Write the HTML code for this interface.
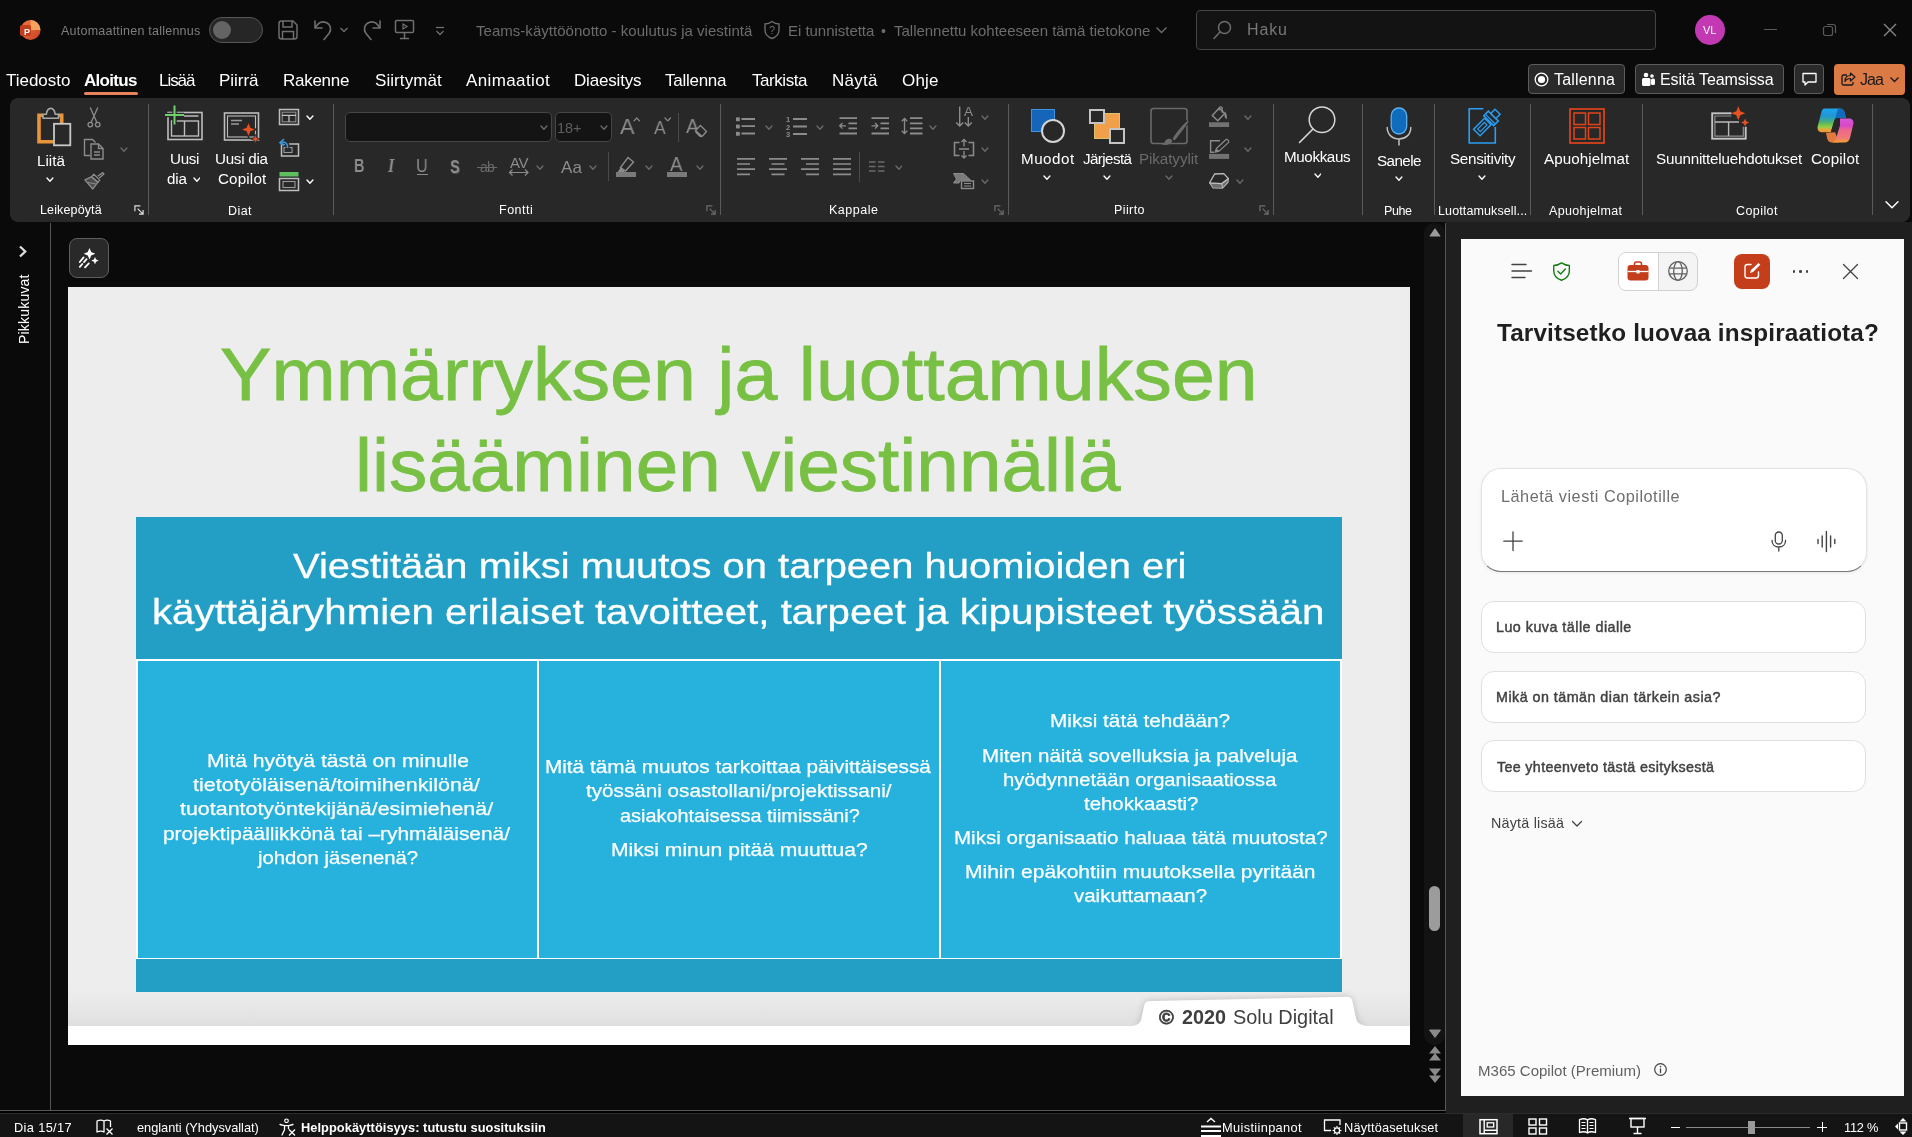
<!DOCTYPE html>
<html lang="fi"><head><meta charset="utf-8"><title>PowerPoint</title><style>
html,body{margin:0;padding:0;background:#0a0a0a;}
body{width:1912px;height:1137px;position:relative;overflow:hidden;font-family:"Liberation Sans",sans-serif;}
.a{position:absolute;display:block;}
.t{position:absolute;white-space:nowrap;line-height:1;transform-origin:0 0;will-change:transform;}
</style></head><body>
<div class="a" style="left:10px;top:98px;width:1900px;height:124px;background:#282828;border-radius:8px;"></div>
<div class="a" style="left:50px;top:223px;width:1px;height:888px;background:#555555;"></div>
<div class="a" style="left:0px;top:1110px;width:1446px;height:1px;background:#565656;"></div>
<div class="a" style="left:0px;top:1111px;width:1445px;height:2px;background:#000000;"></div>
<div class="a" style="left:1424px;top:223px;width:21px;height:822px;background:#131313;border-radius:10px;"></div>
<div class="a" style="left:1445px;top:223px;width:1px;height:888px;background:#565656;"></div>
<div class="a" style="left:1446px;top:222px;width:466px;height:891px;background:#1f1f1f;"></div>
<svg class="a" style="left:19px;top:19px;" width="22" height="22" viewBox="0 0 22 22" fill="none"><defs><linearGradient id="pg" x1="0" y1="0" x2="1" y2="1"><stop offset="0" stop-color="#f07a4a"/><stop offset="1" stop-color="#c8401e"/></linearGradient></defs>
<circle cx="11.5" cy="11" r="10" fill="url(#pg)"/><path d="M11.5 1a10 10 0 0 1 10 10h-10z" fill="#f4a35f"/>
<rect x="1" y="6" width="11" height="11" rx="2" fill="#c43e1c"/></svg>
<span class="t" style="left:24.20px;top:28.00px;font-size:9px;color:#fff;font-weight:700;">P</span>
<span class="t" style="left:61.00px;top:25.00px;font-size:12.5px;color:#7e7e7e;letter-spacing:0.233px;">Automaattinen tallennus</span>
<div class="a" style="left:209px;top:17px;width:54px;height:26px;background:#262626;border:1.5px solid #575757;box-sizing:border-box;border-radius:13px;"></div>
<div class="a" style="left:213px;top:21px;width:18px;height:18px;background:#646464;border-radius:9px;"></div>
<svg class="a" style="left:277px;top:19px;" width="22" height="22" viewBox="0 0 22 22" fill="none"><path d="M2 4.5A2.5 2.5 0 0 1 4.500 2H16l4 4v11.5a2.500 2.500 0 0 1-2.500 2.500h-13A2.500 2.500 0 0 1 2 17.500z M6 2v6h9V2 M5.5 20v-7.500h11V20" stroke="#6f6f6f" stroke-width="1.5"/></svg>
<svg class="a" style="left:312px;top:18px;" width="24" height="24" viewBox="0 0 24 24" fill="none"><path d="M3 3v7h7" stroke="#6f6f6f" stroke-width="1.6" stroke-linecap="round" stroke-linejoin="round"/><path d="M3.500 9.500C6 5 10 3 14 4.500c4.500 1.700 6 7 3 11L12 21.500" stroke="#6f6f6f" stroke-width="1.600" stroke-linecap="round"/></svg>
<svg class="a" style="left:339px;top:26px;" width="10" height="8" viewBox="0 0 10 8" fill="none"><path d="M1.500 2l3.500 3.500L8.500 2" stroke="#6f6f6f" stroke-width="1.300"/></svg>
<svg class="a" style="left:359px;top:18px;" width="24" height="24" viewBox="0 0 24 24" fill="none"><path d="M21 3v7h-7" stroke="#6f6f6f" stroke-width="1.6" stroke-linecap="round" stroke-linejoin="round"/><path d="M20.500 9.500C18 5 14 3 10 4.500c-4.500 1.700-6 7-3 11L12 21.500" stroke="#6f6f6f" stroke-width="1.600" stroke-linecap="round"/></svg>
<svg class="a" style="left:394px;top:19px;" width="22" height="22" viewBox="0 0 22 22" fill="none"><rect x="1.500" y="1.500" width="18" height="12" rx="1" stroke="#6f6f6f" stroke-width="1.500"/><path d="M10.500 13.500v6M6 19.500h9" stroke="#6f6f6f" stroke-width="1.500"/><path d="M9 5l4 2.500L9 10z" stroke="#6f6f6f" stroke-width="1.200"/></svg>
<svg class="a" style="left:434px;top:26px;" width="12" height="12" viewBox="0 0 12 12" fill="none"><path d="M2 1.500h8" stroke="#6f6f6f" stroke-width="1.300"/><path d="M2.500 5l3.500 3.500L9.500 5" stroke="#6f6f6f" stroke-width="1.300"/></svg>
<span class="t" style="left:476.00px;top:23.00px;font-size:15px;color:#6c6c6c;letter-spacing:0.029px;">Teams-käyttöönotto - koulutus ja viestintä</span>
<svg class="a" style="left:763px;top:20px;" width="18" height="20" viewBox="0 0 18 20" fill="none"><path d="M9 1.500c2.500 2 4.500 2.500 7 2.500v6c0 4-3 7-7 8.500C5 17 2 14 2 10V4c2.500 0 4.500-.5 7-2.500z" stroke="#6c6c6c" stroke-width="1.400"/></svg>
<span class="t" style="left:769.00px;top:25.00px;font-size:11px;color:#6c6c6c;">?</span>
<span class="t" style="left:788.00px;top:23.00px;font-size:15px;color:#6c6c6c;letter-spacing:-0.029px;">Ei tunnistetta</span>
<span class="t" style="left:880.50px;top:24.00px;font-size:14px;color:#6c6c6c;">•</span>
<span class="t" style="left:894.00px;top:23.00px;font-size:15px;color:#6c6c6c;letter-spacing:-0.014px;">Tallennettu kohteeseen tämä tietokone</span>
<svg class="a" style="left:1155px;top:25px;" width="13" height="10" viewBox="0 0 13 10" fill="none"><path d="M1.500 2.500l5 5 5-5" stroke="#6c6c6c" stroke-width="1.400"/></svg>
<div class="a" style="left:1196px;top:10px;width:460px;height:40px;background:#131313;border:1px solid #444;box-sizing:border-box;border-radius:4px;"></div>
<svg class="a" style="left:1212px;top:19px;" width="22" height="22" viewBox="0 0 22 22" fill="none"><circle cx="12.500" cy="8.500" r="6" stroke="#6d6d6d" stroke-width="1.500"/><path d="M8 13l-6 6.500" stroke="#6d6d6d" stroke-width="1.500" stroke-linecap="round"/></svg>
<span class="t" style="left:1247.00px;top:22.00px;font-size:16px;color:#777;letter-spacing:0.849px;">Haku</span>
<div class="a" style="left:1695px;top:15px;width:30px;height:30px;background:#c239b3;border-radius:15px;"></div>
<span class="t" style="left:1703.33px;top:25.00px;font-size:11px;color:#fff;">VL</span>
<div class="a" style="left:1764px;top:29px;width:13px;height:1px;background:#5a5a5a;"></div>
<svg class="a" style="left:1822px;top:22px;" width="16" height="16" viewBox="0 0 16 16" fill="none"><rect x="1.500" y="4.500" width="9" height="9" rx="2" stroke="#5a5a5a" stroke-width="1.200"/><path d="M5 2.500h6a2.500 2.500 0 0 1 2.500 2.500v6" stroke="#5a5a5a" stroke-width="1.200"/></svg>
<svg class="a" style="left:1882px;top:22px;" width="16" height="16" viewBox="0 0 16 16" fill="none"><path d="M2 2l12 12M14 2L2 14" stroke="#8a8a8a" stroke-width="1.300"/></svg>
<span class="t" style="left:6.00px;top:72.00px;font-size:17px;color:#fff;letter-spacing:-0.017px;">Tiedosto</span>
<span class="t" style="left:84.00px;top:72.00px;font-size:17px;color:#fff;font-weight:700;letter-spacing:-0.692px;">Aloitus</span>
<span class="t" style="left:159.00px;top:72.00px;font-size:17px;color:#fff;letter-spacing:-1.047px;">Lisää</span>
<span class="t" style="left:219.00px;top:72.00px;font-size:17px;color:#fff;letter-spacing:-0.043px;">Piirrä</span>
<span class="t" style="left:283.00px;top:72.00px;font-size:17px;color:#fff;letter-spacing:-0.266px;">Rakenne</span>
<span class="t" style="left:375.00px;top:72.00px;font-size:17px;color:#fff;letter-spacing:0.076px;">Siirtymät</span>
<span class="t" style="left:466.00px;top:72.00px;font-size:17px;color:#fff;letter-spacing:0.378px;">Animaatiot</span>
<span class="t" style="left:574.00px;top:72.00px;font-size:17px;color:#fff;letter-spacing:-0.183px;">Diaesitys</span>
<span class="t" style="left:665.00px;top:72.00px;font-size:17px;color:#fff;letter-spacing:-0.267px;">Tallenna</span>
<span class="t" style="left:752.00px;top:72.00px;font-size:17px;color:#fff;letter-spacing:-0.445px;">Tarkista</span>
<span class="t" style="left:832.00px;top:72.00px;font-size:17px;color:#fff;letter-spacing:0.261px;">Näytä</span>
<span class="t" style="left:902.00px;top:72.00px;font-size:17px;color:#fff;letter-spacing:0.182px;">Ohje</span>
<div class="a" style="left:84px;top:92px;width:54px;height:3px;background:#e8825a;border-radius:1.5px;"></div>
<div class="a" style="left:1528px;top:64px;width:97px;height:30px;background:#2a2a2a;border:1px solid #5c5c5c;box-sizing:border-box;border-radius:4px;"></div>
<svg class="a" style="left:1534px;top:72px;" width="15" height="15" viewBox="0 0 15 15" fill="none"><circle cx="7.500" cy="7.500" r="6.300" stroke="#fff" stroke-width="1.300"/><circle cx="7.500" cy="7.500" r="3.600" fill="#fff"/></svg>
<span class="t" style="left:1554.00px;top:72.00px;font-size:16px;color:#fff;letter-spacing:0.185px;">Tallenna</span>
<div class="a" style="left:1635px;top:64px;width:149px;height:30px;background:#2a2a2a;border:1px solid #5c5c5c;box-sizing:border-box;border-radius:4px;"></div>
<svg class="a" style="left:1640px;top:71px;" width="16" height="16" viewBox="0 0 16 16" fill="none"><circle cx="6" cy="4" r="2.300" fill="#fff"/><circle cx="12" cy="5" r="1.800" fill="#fff"/><rect x="2" y="7" width="8.500" height="8" rx="1.500" fill="#fff"/><rect x="11" y="7.500" width="4" height="6.500" rx="1.500" fill="#fff"/></svg>
<span class="t" style="left:1660.00px;top:72.00px;font-size:16px;color:#fff;letter-spacing:-0.121px;">Esitä Teamsissa</span>
<div class="a" style="left:1794px;top:64px;width:30px;height:30px;background:#2a2a2a;border:1px solid #5c5c5c;box-sizing:border-box;border-radius:4px;"></div>
<svg class="a" style="left:1801px;top:71px;" width="17" height="16" viewBox="0 0 17 16" fill="none"><path d="M2 2.500h13v8.500H7l-3 3v-3H2z" stroke="#fff" stroke-width="1.300" stroke-linejoin="round"/></svg>
<div class="a" style="left:1834px;top:64px;width:71px;height:30.5px;background:#dc7a45;border-radius:4px;"></div>
<svg class="a" style="left:1840px;top:71px;" width="17" height="16" viewBox="0 0 17 16" fill="none"><path d="M7 4H3.500A1.500 1.500 0 0 0 2 5.500v7A1.500 1.500 0 0 0 3.500 14h8a1.500 1.500 0 0 0 1.500-1.500V11" stroke="#1a1a1a" stroke-width="1.300"/><path d="M10.500 2l4.500 4-4.500 4V7.500c-3 0-4.500 1-5.500 3 0-4 2-6 5.500-6z" stroke="#1a1a1a" stroke-width="1.200" stroke-linejoin="round"/></svg>
<span class="t" style="left:1860.00px;top:72.00px;font-size:16px;color:#1a1a1a;letter-spacing:-0.949px;">Jaa</span>
<svg class="a" style="left:1889px;top:75px;" width="11" height="9" viewBox="0 0 11 9" fill="none"><path d="M1.500 2.500l4 4 4-4" stroke="#1a1a1a" stroke-width="1.400"/></svg>
<svg class="a" style="left:35px;top:106px;" width="38" height="42" viewBox="0 0 38 42" fill="none"><path d="M8 9.200H4v26.600h14" stroke="#ea943a" stroke-width="3.600"/><path d="M23.500 9.200h3.200v8" stroke="#ea943a" stroke-width="3.600"/>
<path d="M8 12.300V8.300h3.300c.5-3.700 2.200-5.900 4.450-5.900s3.950 2.200 4.450 5.900h3.300v4z" fill="#282828" stroke="#a8a8a8" stroke-width="1.600" stroke-linejoin="round"/>
<rect x="19" y="17.800" width="16.300" height="21.500" fill="#282828" stroke="#c8c8c8" stroke-width="1.800"/></svg>
<span class="t" style="left:36.50px;top:153.00px;font-size:15.2px;color:#fff;letter-spacing:0.021px;">Liitä</span>
<svg class="a" style="left:46.45px;top:177.1px;" width="7.9" height="5.2" viewBox="0 0 7.9 5.2" fill="none"><path d="M1 1l2.95 3.2 2.95 -3.2" stroke="#fff" stroke-width="1.35" stroke-linecap="round" stroke-linejoin="round"/></svg>
<svg class="a" style="left:86px;top:106px;" width="16" height="23" viewBox="0 0 16 23" fill="none"><path d="M4.200 1.500l6.600 14.800M11.800 1.500L5.200 16.300" stroke="#8c8c8c" stroke-width="1.300"/><circle cx="4.300" cy="18.600" r="2.300" stroke="#8c8c8c" stroke-width="1.300"/><circle cx="11.700" cy="18.600" r="2.300" stroke="#8c8c8c" stroke-width="1.300"/></svg>
<svg class="a" style="left:83px;top:138px;" width="22" height="22" viewBox="0 0 22 22" fill="none"><path d="M7 17.500H1.500V1.500h8l3 3" stroke="#8c8c8c" stroke-width="1.400"/><path d="M8 6h7.500l4.500 4.500V21H8z" stroke="#8c8c8c" stroke-width="1.400" fill="#282828"/><path d="M15.500 6v4.500H20M11 14h6M11 17h6" stroke="#8c8c8c" stroke-width="1.300"/></svg>
<svg class="a" style="left:119.75px;top:147.0px;" width="7.9" height="5.2" viewBox="0 0 7.9 5.2" fill="none"><path d="M1 1l2.95 3.2 2.95 -3.2" stroke="#6a6a6a" stroke-width="1.35" stroke-linecap="round" stroke-linejoin="round"/></svg>
<svg class="a" style="left:83px;top:170px;" width="23" height="21" viewBox="0 0 23 21" fill="none"><path d="M14.600 6.300l5.200-3.700 1.200 1.500-4.800 4" stroke="#8c8c8c" stroke-width="1.300" stroke-linejoin="round"/><path d="M10.800 4.300l6 5.800-1.900 2.100-6.400-5.600z" stroke="#8c8c8c" stroke-width="1.300" stroke-linejoin="round"/><path d="M8.300 6.800L1.900 9.800l7.800 9.200 5.100-6.600z" stroke="#8c8c8c" stroke-width="1.300" fill="#4c4c4c" stroke-linejoin="round"/><path d="M5 12.500l8 1.500" stroke="#8c8c8c" stroke-width="1"/></svg>
<span class="t" style="left:39.70px;top:204.00px;font-size:12.5px;color:#fff;letter-spacing:0.132px;">Leikepöytä</span>
<svg class="a" style="left:133.5px;top:204.5px;" width="10" height="10" viewBox="0 0 11 11" fill="none"><path d="M1 7V1h6" stroke="#e0e0e0" stroke-width="1.300"/><path d="M4 4l6 6M10 5.500V10H5.500" stroke="#e0e0e0" stroke-width="1.300"/></svg>
<div class="a" style="left:148px;top:104px;width:1px;height:111px;background:#5a5a5a;"></div>
<svg class="a" style="left:164px;top:104px;" width="40" height="38" viewBox="0 0 40 38" fill="none"><rect x="4" y="8.500" width="34" height="27" stroke="#bdbdbd" stroke-width="1.600"/><rect x="7.500" y="17" width="27" height="15" stroke="#bdbdbd" stroke-width="1.400"/><path d="M20.500 17v15M20 12h14.500" stroke="#bdbdbd" stroke-width="1.400"/>
<rect x="0" y="1" width="21" height="21" fill="#282828" opacity="0"/><path d="M10.500 1.500v19M1 11h19" stroke="#282828" stroke-width="4.500"/><path d="M10.500 1.500v19M1 11h19" stroke="#6fcf6f" stroke-width="2"/></svg>
<span class="t" style="left:170.40px;top:151.00px;font-size:15.2px;color:#fff;letter-spacing:-0.336px;">Uusi</span>
<span class="t" style="left:167.30px;top:171.00px;font-size:15.2px;color:#fff;letter-spacing:-0.160px;">dia</span>
<svg class="a" style="left:192.55px;top:176.9px;" width="7.9" height="5.2" viewBox="0 0 7.9 5.2" fill="none"><path d="M1 1l2.95 3.2 2.95 -3.2" stroke="#fff" stroke-width="1.35" stroke-linecap="round" stroke-linejoin="round"/></svg>
<svg class="a" style="left:223px;top:111px;" width="40" height="34" viewBox="0 0 40 34" fill="none"><rect x="1.500" y="2" width="34" height="27" stroke="#bdbdbd" stroke-width="1.600"/><rect x="4.500" y="5" width="28" height="21" stroke="#bdbdbd" stroke-width="1.100"/><path d="M8 9.500h11M8 13h8" stroke="#9a9a9a" stroke-width="1.300"/>
<path d="M25.500 10.500l2.300 5.700 5.700 2.300-5.700 2.300-2.300 5.700-2.300-5.700-5.700-2.300 5.700-2.300z" fill="#e8501f" stroke="#282828" stroke-width="1.200"/><path d="M32.500 23.500l1.300 3.200 3.200 1.300-3.200 1.300-1.300 3.200-1.300-3.200-3.200-1.300 3.200-1.300z" fill="#e8501f" stroke="#282828" stroke-width=".8"/></svg>
<span class="t" style="left:215.30px;top:151.00px;font-size:15.2px;color:#fff;letter-spacing:-0.275px;">Uusi dia</span>
<span class="t" style="left:217.80px;top:171.00px;font-size:15.2px;color:#fff;letter-spacing:0.157px;">Copilot</span>
<svg class="a" style="left:278px;top:108px;" width="22" height="18" viewBox="0 0 22 18" fill="none"><rect x="1.500" y="1.500" width="19" height="15" stroke="#bdbdbd" stroke-width="1.500"/><rect x="4.200" y="4.200" width="13.600" height="9.600" stroke="#8f8f8f" stroke-width="1.100"/><path d="M4 7.300h14M11 7.300v6.500" stroke="#c4c4c4" stroke-width="1.300"/></svg>
<svg class="a" style="left:306.35px;top:115.0px;" width="7.9" height="5.2" viewBox="0 0 7.9 5.2" fill="none"><path d="M1 1l2.95 3.2 2.95 -3.2" stroke="#fff" stroke-width="1.35" stroke-linecap="round" stroke-linejoin="round"/></svg>
<svg class="a" style="left:278px;top:138px;" width="22" height="20" viewBox="0 0 22 20" fill="none"><rect x="3.500" y="6" width="17" height="12" stroke="#bdbdbd" stroke-width="1.500"/><rect x="6" y="9.500" width="8" height="5" stroke="#9a9a9a" stroke-width="1.100"/><path d="M9.500 10C10 5 7 2.500 3 4" stroke="#282828" stroke-width="4"/><path d="M9.500 10C10 5.500 7 3 2.500 4.500" stroke="#3a96dd" stroke-width="1.600"/><path d="M6 1L2 4.700l4.200 2.800" stroke="#3a96dd" stroke-width="1.600"/></svg>
<svg class="a" style="left:278px;top:171px;" width="22" height="21" viewBox="0 0 22 21" fill="none"><rect x="1.500" y="1" width="19" height="4.500" fill="#5fbf5f"/><rect x="1.500" y="7.500" width="19" height="12" stroke="#bdbdbd" stroke-width="1.500"/><rect x="5" y="10.500" width="12" height="6" stroke="#9a9a9a" stroke-width="1.100"/></svg>
<svg class="a" style="left:306.35px;top:179.0px;" width="7.9" height="5.2" viewBox="0 0 7.9 5.2" fill="none"><path d="M1 1l2.95 3.2 2.95 -3.2" stroke="#fff" stroke-width="1.35" stroke-linecap="round" stroke-linejoin="round"/></svg>
<span class="t" style="left:228.30px;top:205.00px;font-size:12.5px;color:#fff;letter-spacing:0.415px;">Diat</span>
<div class="a" style="left:333px;top:104px;width:1px;height:111px;background:#5a5a5a;"></div>
<div class="a" style="left:344.5px;top:112px;width:207px;height:29.5px;background:#141414;border:1px solid #464646;box-sizing:border-box;border-radius:5px;"></div>
<svg class="a" style="left:540.25px;top:125.0px;" width="7.9" height="5.2" viewBox="0 0 7.9 5.2" fill="none"><path d="M1 1l2.95 3.2 2.95 -3.2" stroke="#6a6a6a" stroke-width="1.35" stroke-linecap="round" stroke-linejoin="round"/></svg>
<div class="a" style="left:554.5px;top:112px;width:57.5px;height:29.5px;background:#141414;border:1px solid #464646;box-sizing:border-box;border-radius:5px;"></div>
<span class="t" style="left:557.00px;top:121.00px;font-size:14.5px;color:#5e5e5e;letter-spacing:-0.064px;">18+</span>
<svg class="a" style="left:600.35px;top:125.0px;" width="7.9" height="5.2" viewBox="0 0 7.9 5.2" fill="none"><path d="M1 1l2.95 3.2 2.95 -3.2" stroke="#6a6a6a" stroke-width="1.35" stroke-linecap="round" stroke-linejoin="round"/></svg>
<span class="t" style="left:619.70px;top:116.00px;font-size:22.5px;color:#8c8c8c;transform:scaleX(0.9667);">A</span>
<svg class="a" style="left:632.55px;top:116.8px;" width="7.5" height="4.8" viewBox="0 0 7.5 4.8" fill="none"><path d="M1 3.8l2.75 -2.8 2.75 2.8" stroke="#8c8c8c" stroke-width="1.2" stroke-linecap="round" stroke-linejoin="round"/></svg>
<span class="t" style="left:653.80px;top:118.00px;font-size:19px;color:#8c8c8c;transform:scaleX(0.9231);">A</span>
<svg class="a" style="left:664.45px;top:116.8px;" width="7.5" height="4.8" viewBox="0 0 7.5 4.8" fill="none"><path d="M1 1l2.75 2.8 2.75 -2.8" stroke="#8c8c8c" stroke-width="1.2" stroke-linecap="round" stroke-linejoin="round"/></svg>
<div class="a" style="left:678px;top:113px;width:1px;height:29px;background:#4a4a4a;"></div>
<span class="t" style="left:685.60px;top:115.00px;font-size:21px;color:#8c8c8c;transform:scaleX(0.9286);">A</span>
<svg class="a" style="left:694px;top:124px;" width="14" height="14" viewBox="0 0 14 14" fill="none"><path d="M6.500 1.500l6 6-4.500 5-6.500-6z" stroke="#8c8c8c" stroke-width="1.300" fill="#282828"/><path d="M1.800 6.500l6.200 6-2 .8-5-5z" fill="#8c8c8c"/></svg>
<span class="t" style="left:353.93px;top:157.00px;font-size:18.8px;color:#8c8c8c;font-weight:700;transform:scaleX(0.7750);">B</span>
<span class="t" style="left:388.16px;top:156.00px;font-size:19px;color:#8c8c8c;font-weight:700;font-style:italic;transform:scaleX(0.8556);font-family:'Liberation Serif',serif;">I</span>
<span class="t" style="left:416.37px;top:158.00px;font-size:17.5px;color:#8c8c8c;transform:scaleX(0.9273);">U</span>
<div class="a" style="left:416.5px;top:174px;width:11.5px;height:1.3px;background:#8c8c8c;"></div>
<span class="t" style="left:449.90px;top:157.00px;font-size:19px;color:#8c8c8c;font-weight:700;transform:scaleX(0.7667);text-shadow:1px 1px 0 #555;">S</span>
<span class="t" style="left:479.50px;top:160.00px;font-size:14px;color:#6a6a6a;letter-spacing:-0.786px;">ab</span>
<div class="a" style="left:477px;top:166.5px;width:20px;height:1.2px;background:#6a6a6a;"></div>
<span class="t" style="left:509.50px;top:155.00px;font-size:15px;color:#8c8c8c;letter-spacing:-0.392px;">AV</span>
<svg class="a" style="left:508px;top:168px;" width="22" height="9" viewBox="0 0 22 9" fill="none"><path d="M1.500 4.500h18.500M4.500 1.500l-3 3 3 3M17 1.500l3 3-3 3" stroke="#8c8c8c" stroke-width="1.200"/></svg>
<svg class="a" style="left:536.45px;top:164.9px;" width="7.9" height="5.2" viewBox="0 0 7.9 5.2" fill="none"><path d="M1 1l2.95 3.2 2.95 -3.2" stroke="#6a6a6a" stroke-width="1.35" stroke-linecap="round" stroke-linejoin="round"/></svg>
<span class="t" style="left:561.00px;top:159.00px;font-size:17px;color:#8c8c8c;letter-spacing:0.161px;">Aa</span>
<svg class="a" style="left:588.75px;top:164.9px;" width="7.9" height="5.2" viewBox="0 0 7.9 5.2" fill="none"><path d="M1 1l2.95 3.2 2.95 -3.2" stroke="#6a6a6a" stroke-width="1.35" stroke-linecap="round" stroke-linejoin="round"/></svg>
<div class="a" style="left:608px;top:152px;width:1px;height:29px;background:#4a4a4a;"></div>
<svg class="a" style="left:615px;top:156px;" width="22" height="17" viewBox="0 0 22 17" fill="none"><path d="M13 1.500l5.500 4.500-8 9-5-3.500z" stroke="#8c8c8c" stroke-width="1.400"/><path d="M5.500 11.500l4.500 3.500-2 1.500H2.500z" fill="#8c8c8c"/></svg>
<div class="a" style="left:616px;top:172.4px;width:20px;height:4.2px;background:#7a7a7a;"></div>
<svg class="a" style="left:645.25px;top:164.9px;" width="7.9" height="5.2" viewBox="0 0 7.9 5.2" fill="none"><path d="M1 1l2.95 3.2 2.95 -3.2" stroke="#6a6a6a" stroke-width="1.35" stroke-linecap="round" stroke-linejoin="round"/></svg>
<span class="t" style="left:669.80px;top:155.00px;font-size:19.5px;color:#8c8c8c;transform:scaleX(0.9615);">A</span>
<div class="a" style="left:667px;top:172.4px;width:20px;height:4.2px;background:#7a7a7a;"></div>
<svg class="a" style="left:696.45px;top:164.9px;" width="7.9" height="5.2" viewBox="0 0 7.9 5.2" fill="none"><path d="M1 1l2.95 3.2 2.95 -3.2" stroke="#6a6a6a" stroke-width="1.35" stroke-linecap="round" stroke-linejoin="round"/></svg>
<span class="t" style="left:499.30px;top:204.00px;font-size:12.5px;color:#fff;letter-spacing:0.503px;">Fontti</span>
<svg class="a" style="left:705.5px;top:204.5px;" width="10" height="10" viewBox="0 0 11 11" fill="none"><path d="M1 7V1h6" stroke="#6e6e6e" stroke-width="1.300"/><path d="M4 4l6 6M10 5.500V10H5.500" stroke="#6e6e6e" stroke-width="1.300"/></svg>
<div class="a" style="left:720px;top:104px;width:1px;height:111px;background:#5a5a5a;"></div>
<svg class="a" style="left:735px;top:116px;" width="21" height="21" viewBox="0 0 21 21" fill="none"><rect x="1" y="1.4" width="3.800" height="3.800" fill="#8c8c8c"/><rect x="1" y="8.6" width="3.800" height="3.800" fill="#8c8c8c"/><rect x="1" y="15.9" width="3.800" height="3.800" fill="#8c8c8c"/><path d="M6.5 3h13.5M6.5 10.2h13.5M6.5 17.5h13.5" stroke="#8c8c8c" stroke-width="1.8"/></svg>
<svg class="a" style="left:765.35px;top:124.9px;" width="7.9" height="5.2" viewBox="0 0 7.9 5.2" fill="none"><path d="M1 1l2.95 3.2 2.95 -3.2" stroke="#6a6a6a" stroke-width="1.35" stroke-linecap="round" stroke-linejoin="round"/></svg>
<svg class="a" style="left:785px;top:115px;" width="23" height="23" viewBox="0 0 23 23" fill="none"><path d="M8 4h14M8 11.5h14M8 19h14" stroke="#8c8c8c" stroke-width="1.8"/></svg>
<span class="t" style="left:786.30px;top:116.00px;font-size:7.5px;color:#8c8c8c;font-weight:700;">1</span>
<span class="t" style="left:786.30px;top:124.00px;font-size:7.5px;color:#8c8c8c;font-weight:700;">2</span>
<span class="t" style="left:786.30px;top:131.00px;font-size:7.5px;color:#8c8c8c;font-weight:700;">3</span>
<svg class="a" style="left:816.45px;top:124.9px;" width="7.9" height="5.2" viewBox="0 0 7.9 5.2" fill="none"><path d="M1 1l2.95 3.2 2.95 -3.2" stroke="#6a6a6a" stroke-width="1.35" stroke-linecap="round" stroke-linejoin="round"/></svg>
<svg class="a" style="left:838px;top:116px;" width="20" height="21" viewBox="0 0 20 21" fill="none"><path d="M1.5 2.2h17.5M10.5 7.3h8.5M10.5 12.4h8.5M1.5 17.5h17.5" stroke="#8c8c8c" stroke-width="1.8"/><path d="M8 9.800H2M4.500 7L1.700 9.800l2.800 2.800" stroke="#8c8c8c" stroke-width="1.300"/></svg>
<svg class="a" style="left:870px;top:116px;" width="20" height="21" viewBox="0 0 20 21" fill="none"><path d="M1.5 2.2h17.5M10.5 7.3h8.5M10.5 12.4h8.5M1.5 17.5h17.5" stroke="#8c8c8c" stroke-width="1.8"/><path d="M1.500 9.800H7.500M5 7l2.800 2.800L5 12.600" stroke="#8c8c8c" stroke-width="1.300"/></svg>
<svg class="a" style="left:900px;top:116px;" width="24" height="21" viewBox="0 0 24 21" fill="none"><path d="M10 2.2h12.5M10 7.3h12.5M10 12.4h12.5M10 17.5h12.5" stroke="#8c8c8c" stroke-width="1.8"/><path d="M4.500 2.500v15M1.800 5.200L4.500 2.500l2.700 2.700M1.800 14.800l2.700 2.700 2.700-2.700" stroke="#8c8c8c" stroke-width="1.300"/></svg>
<svg class="a" style="left:929.45px;top:124.9px;" width="7.9" height="5.2" viewBox="0 0 7.9 5.2" fill="none"><path d="M1 1l2.95 3.2 2.95 -3.2" stroke="#6a6a6a" stroke-width="1.35" stroke-linecap="round" stroke-linejoin="round"/></svg>
<svg class="a" style="left:954px;top:105px;" width="22" height="24" viewBox="0 0 22 24" fill="none"><path d="M5.700 1.500v19.500M2.200 17.500l3.500 3.500 3.500-3.500M14.300 12v9M10.800 17.500l3.500 3.500 3.500-3.500" stroke="#8c8c8c" stroke-width="1.400"/></svg>
<span class="t" style="left:963.80px;top:105.00px;font-size:13.5px;color:#8c8c8c;">A</span>
<svg class="a" style="left:981.35px;top:115.2px;" width="7.9" height="5.2" viewBox="0 0 7.9 5.2" fill="none"><path d="M1 1l2.95 3.2 2.95 -3.2" stroke="#6a6a6a" stroke-width="1.35" stroke-linecap="round" stroke-linejoin="round"/></svg>
<svg class="a" style="left:952px;top:138px;" width="24" height="21" viewBox="0 0 24 21" fill="none"><path d="M7.500 4.500H2.500v13H7.500M16.500 4.500h5v13H16.500" stroke="#8c8c8c" stroke-width="1.500"/><path d="M7 11h10M12 1.500v7M9.500 4L12 1.500 14.500 4M12 13v7M9.500 17.500L12 20l2.500-2.500" stroke="#8c8c8c" stroke-width="1.300"/></svg>
<svg class="a" style="left:981.35px;top:146.8px;" width="7.9" height="5.2" viewBox="0 0 7.9 5.2" fill="none"><path d="M1 1l2.95 3.2 2.95 -3.2" stroke="#6a6a6a" stroke-width="1.35" stroke-linecap="round" stroke-linejoin="round"/></svg>
<svg class="a" style="left:952px;top:172px;" width="24" height="18" viewBox="0 0 24 18" fill="none"><path d="M1.500 1.500h10l7 6.500h-10l-1.500 3-5.500 0 3-4z" fill="#7a7a7a" stroke="#8c8c8c" stroke-width="1"/><rect x="9.500" y="9" width="12" height="7.500" fill="#282828" stroke="#8c8c8c" stroke-width="1.400"/><path d="M12 11.500h7M12 14h7" stroke="#8c8c8c" stroke-width="1"/></svg>
<svg class="a" style="left:981.35px;top:178.7px;" width="7.9" height="5.2" viewBox="0 0 7.9 5.2" fill="none"><path d="M1 1l2.95 3.2 2.95 -3.2" stroke="#6a6a6a" stroke-width="1.35" stroke-linecap="round" stroke-linejoin="round"/></svg>
<svg class="a" style="left:736px;top:156px;" width="20" height="20" viewBox="0 0 20 20" fill="none"><path d="M1 2.8000000000000114h18M1 8h13M1 13.199999999999989h18M1 18.400000000000006h13" stroke="#8c8c8c" stroke-width="1.7"/></svg>
<svg class="a" style="left:768px;top:156px;" width="20" height="20" viewBox="0 0 20 20" fill="none"><path d="M1 2.8000000000000114h18M3.5 8h13.0M1 13.199999999999989h18M3.5 18.400000000000006h13.0" stroke="#8c8c8c" stroke-width="1.7"/></svg>
<svg class="a" style="left:800px;top:156px;" width="20" height="20" viewBox="0 0 20 20" fill="none"><path d="M1 2.8000000000000114h18M6 8h13M1 13.199999999999989h18M6 18.400000000000006h13" stroke="#8c8c8c" stroke-width="1.7"/></svg>
<svg class="a" style="left:832px;top:156px;" width="20" height="20" viewBox="0 0 20 20" fill="none"><path d="M1 2.8000000000000114h18M1 8h18M1 13.199999999999989h18M1 18.400000000000006h18" stroke="#8c8c8c" stroke-width="1.7"/></svg>
<div class="a" style="left:859px;top:152px;width:1px;height:30px;background:#4a4a4a;"></div>
<svg class="a" style="left:868px;top:160px;" width="18" height="13" viewBox="0 0 18 13" fill="none"><path d="M1 2h6.5M1 6.5h6.5M1 11h6.5M10 2h6.5M10 6.5h6.5M10 11h6.5" stroke="#6a6a6a" stroke-width="1.3"/></svg>
<svg class="a" style="left:894.55px;top:164.6px;" width="7.9" height="5.2" viewBox="0 0 7.9 5.2" fill="none"><path d="M1 1l2.95 3.2 2.95 -3.2" stroke="#6a6a6a" stroke-width="1.35" stroke-linecap="round" stroke-linejoin="round"/></svg>
<span class="t" style="left:829.00px;top:204.00px;font-size:12.5px;color:#fff;letter-spacing:0.513px;">Kappale</span>
<svg class="a" style="left:993.5px;top:204.5px;" width="10" height="10" viewBox="0 0 11 11" fill="none"><path d="M1 7V1h6" stroke="#6e6e6e" stroke-width="1.300"/><path d="M4 4l6 6M10 5.500V10H5.500" stroke="#6e6e6e" stroke-width="1.300"/></svg>
<div class="a" style="left:1008px;top:104px;width:1px;height:111px;background:#5a5a5a;"></div>
<div class="a" style="left:1030.5px;top:108.5px;width:24px;height:23.5px;background:#1566b9;border:1px solid #3f93e0;box-sizing:border-box;"></div>
<div class="a" style="left:1040.8px;top:118.6px;width:24.5px;height:24.5px;background:#282828;border:2px solid #d4d4d4;box-sizing:border-box;border-radius:13px;"></div>
<span class="t" style="left:1021.30px;top:151.00px;font-size:15.2px;color:#fff;letter-spacing:0.512px;">Muodot</span>
<svg class="a" style="left:1043.45px;top:175.2px;" width="7.9" height="5.2" viewBox="0 0 7.9 5.2" fill="none"><path d="M1 1l2.95 3.2 2.95 -3.2" stroke="#fff" stroke-width="1.35" stroke-linecap="round" stroke-linejoin="round"/></svg>
<div class="a" style="left:1094px;top:113px;width:26px;height:26px;background:#f0a04b;border:1px solid #d9c36a;box-sizing:border-box;"></div>
<div class="a" style="left:1089px;top:108.5px;width:16px;height:15.5px;background:#282828;border:2px solid #c4c4c4;box-sizing:border-box;"></div>
<div class="a" style="left:1109.4px;top:128.4px;width:15.5px;height:15.5px;background:#282828;border:2px solid #c4c4c4;box-sizing:border-box;"></div>
<span class="t" style="left:1082.60px;top:151.00px;font-size:15.2px;color:#fff;letter-spacing:-0.605px;">Järjestä</span>
<svg class="a" style="left:1102.75px;top:175.2px;" width="7.9" height="5.2" viewBox="0 0 7.9 5.2" fill="none"><path d="M1 1l2.95 3.2 2.95 -3.2" stroke="#fff" stroke-width="1.35" stroke-linecap="round" stroke-linejoin="round"/></svg>
<svg class="a" style="left:1149px;top:106px;" width="42" height="40" viewBox="0 0 42 40" fill="none"><rect x="2" y="2.500" width="36" height="35" rx="2.500" stroke="#6a6a6a" stroke-width="1.600"/><path d="M38.500 15.500C33 20 27 28 24 33.500" stroke="#282828" stroke-width="5"/><path d="M39 14.500C33 19 26.500 27.500 23.500 33l2 1.500C30 29 36 21.500 39.500 16z" fill="#6a6a6a"/><path d="M22 33c-3-1-6 1-6.500 3.500-1 1.500-3 1.500-4.500 1 4 2.500 10 2 12.500-2.500z" fill="#6a6a6a"/></svg>
<span class="t" style="left:1139.30px;top:151.00px;font-size:15.2px;color:#6a6a6a;letter-spacing:-0.078px;">Pikatyylit</span>
<svg class="a" style="left:1164.65px;top:175.2px;" width="7.9" height="5.2" viewBox="0 0 7.9 5.2" fill="none"><path d="M1 1l2.95 3.2 2.95 -3.2" stroke="#6a6a6a" stroke-width="1.35" stroke-linecap="round" stroke-linejoin="round"/></svg>
<svg class="a" style="left:1208px;top:105px;" width="22" height="23" viewBox="0 0 22 23" fill="none"><path d="M11.200 3L4.300 10.500l5.500 5.300 6.800-7.200z" stroke="#8c8c8c" stroke-width="1.400" stroke-linejoin="round"/><path d="M11.200 5.500V3.300a1.500 1.500 0 0 1 3 0V7.800" stroke="#8c8c8c" stroke-width="1.300"/><path d="M16.800 6.300c1.700 2.300 2.400 4.700 2 7.800-1-.3-2.300-2-2.300-3.600z" fill="#8c8c8c"/><rect x="1" y="17.300" width="20.100" height="4.700" fill="#727272"/></svg>
<svg class="a" style="left:1244.45px;top:115.2px;" width="7.9" height="5.2" viewBox="0 0 7.9 5.2" fill="none"><path d="M1 1l2.95 3.2 2.95 -3.2" stroke="#6a6a6a" stroke-width="1.35" stroke-linecap="round" stroke-linejoin="round"/></svg>
<svg class="a" style="left:1208px;top:137px;" width="22" height="23" viewBox="0 0 22 23" fill="none"><path d="M12 3.700H2.600v11.600H6.200" stroke="#8c8c8c" stroke-width="1.400"/><path d="M7.100 15.300l1.300-3.800 8.800-8.300a1.900 1.900 0 0 1 2.900 2.700l-9 8.200z" stroke="#8c8c8c" stroke-width="1.200" stroke-linejoin="round"/><path d="M7.100 15.300l1.300-3.800 2.700 2.600z" fill="#8c8c8c"/><rect x="1" y="16.900" width="20.100" height="5" fill="#727272"/></svg>
<svg class="a" style="left:1244.45px;top:147.0px;" width="7.9" height="5.2" viewBox="0 0 7.9 5.2" fill="none"><path d="M1 1l2.95 3.2 2.95 -3.2" stroke="#6a6a6a" stroke-width="1.35" stroke-linecap="round" stroke-linejoin="round"/></svg>
<svg class="a" style="left:1208px;top:171px;" width="22" height="19" viewBox="0 0 22 19" fill="none"><path d="M1.600 11.800l12.200.8.800 4.600-9.600-.2zM13.800 12.600l6.600-5-.4 3.800-5.400 5.800z" fill="#6e6e6e" stroke="#b0b0b0" stroke-width="1.100" stroke-linejoin="round"/><path d="M6.600 3l9.200-.4 4.600 5-6.600 5-12.200-.8z" fill="#282828" stroke="#c0c0c0" stroke-width="1.300" stroke-linejoin="round"/></svg>
<svg class="a" style="left:1236.25px;top:178.8px;" width="7.9" height="5.2" viewBox="0 0 7.9 5.2" fill="none"><path d="M1 1l2.95 3.2 2.95 -3.2" stroke="#6a6a6a" stroke-width="1.35" stroke-linecap="round" stroke-linejoin="round"/></svg>
<span class="t" style="left:1114.00px;top:204.00px;font-size:12.5px;color:#fff;letter-spacing:0.395px;">Piirto</span>
<svg class="a" style="left:1258.5px;top:204.5px;" width="10" height="10" viewBox="0 0 11 11" fill="none"><path d="M1 7V1h6" stroke="#6e6e6e" stroke-width="1.300"/><path d="M4 4l6 6M10 5.500V10H5.500" stroke="#6e6e6e" stroke-width="1.300"/></svg>
<div class="a" style="left:1273px;top:104px;width:1px;height:111px;background:#5a5a5a;"></div>
<svg class="a" style="left:1296px;top:104px;" width="42" height="42" viewBox="0 0 42 42" fill="none"><circle cx="26" cy="15.700" r="12.800" stroke="#d6d6d6" stroke-width="1.500"/><path d="M17 25L3.500 38.500" stroke="#d6d6d6" stroke-width="1.600" stroke-linecap="round"/></svg>
<span class="t" style="left:1284.30px;top:149.00px;font-size:15.2px;color:#fff;letter-spacing:-0.375px;">Muokkaus</span>
<svg class="a" style="left:1313.55px;top:173.1px;" width="7.9" height="5.2" viewBox="0 0 7.9 5.2" fill="none"><path d="M1 1l2.95 3.2 2.95 -3.2" stroke="#fff" stroke-width="1.35" stroke-linecap="round" stroke-linejoin="round"/></svg>
<div class="a" style="left:1362px;top:104px;width:1px;height:111px;background:#5a5a5a;"></div>
<svg class="a" style="left:1384px;top:105px;" width="30" height="42" viewBox="0 0 30 42" fill="none"><rect x="7.200" y="3" width="15.500" height="26" rx="7.700" fill="#0f6cbd" stroke="#5fb0f0" stroke-width="1.300"/><path d="M3.200 22.500c0 7 5.200 11.500 11.800 11.500s11.800-4.500 11.800-11.500M15 34v6" stroke="#c0c0c0" stroke-width="1.500" stroke-linecap="round"/></svg>
<span class="t" style="left:1377.00px;top:153.00px;font-size:15.2px;color:#fff;letter-spacing:-0.569px;">Sanele</span>
<svg class="a" style="left:1394.65px;top:176.4px;" width="7.9" height="5.2" viewBox="0 0 7.9 5.2" fill="none"><path d="M1 1l2.95 3.2 2.95 -3.2" stroke="#fff" stroke-width="1.35" stroke-linecap="round" stroke-linejoin="round"/></svg>
<span class="t" style="left:1383.70px;top:205.00px;font-size:12.5px;color:#fff;letter-spacing:-0.414px;">Puhe</span>
<div class="a" style="left:1434px;top:104px;width:1px;height:111px;background:#5a5a5a;"></div>
<svg class="a" style="left:1467px;top:105px;" width="40" height="40" viewBox="0 0 40 40" fill="none"><path d="M16.300 3.800H2.200V38H28.300V22" stroke="#2a9df4" stroke-width="1.600"/><g transform="translate(15.500 21.800) rotate(-45)" stroke="#2a9df4" fill="#282828"><rect x="-8" y="-4.600" width="15.500" height="9.200" stroke-width="1.500"/><rect x="-5" y="-1.800" width="9.500" height="3.600" stroke-width="1.200"/><rect x="8.800" y="-7" width="6.500" height="14" stroke-width="1.600"/><path d="M11 -7v14" stroke-width="1.200"/><rect x="15.300" y="-3.600" width="6" height="7.200" stroke-width="1.500"/></g></svg>
<span class="t" style="left:1450.00px;top:151.00px;font-size:15.2px;color:#fff;letter-spacing:-0.277px;">Sensitivity</span>
<svg class="a" style="left:1478.25px;top:174.8px;" width="7.9" height="5.2" viewBox="0 0 7.9 5.2" fill="none"><path d="M1 1l2.95 3.2 2.95 -3.2" stroke="#fff" stroke-width="1.35" stroke-linecap="round" stroke-linejoin="round"/></svg>
<span class="t" style="left:1437.70px;top:205.00px;font-size:12.5px;color:#fff;letter-spacing:0.115px;">Luottamuksell...</span>
<div class="a" style="left:1530px;top:104px;width:1px;height:111px;background:#5a5a5a;"></div>
<svg class="a" style="left:1568px;top:107px;" width="38" height="38" viewBox="0 0 38 38" fill="none"><rect x="6" y="6" width="11.500" height="11.500" stroke="#e0451a" stroke-width="1.500"/><rect x="6" y="20.5" width="11.500" height="11.500" stroke="#e0451a" stroke-width="1.500"/><rect x="20.5" y="6" width="11.500" height="11.500" stroke="#e0451a" stroke-width="1.500"/><rect x="20.5" y="20.5" width="11.500" height="11.500" stroke="#e0451a" stroke-width="1.500"/><rect x="2" y="2" width="34" height="34" stroke="#e0451a" stroke-width="1.700"/></svg>
<span class="t" style="left:1544.00px;top:151.00px;font-size:15.2px;color:#fff;letter-spacing:0.079px;">Apuohjelmat</span>
<span class="t" style="left:1549.00px;top:205.00px;font-size:12.5px;color:#fff;letter-spacing:0.348px;">Apuohjelmat</span>
<div class="a" style="left:1642px;top:104px;width:1px;height:111px;background:#5a5a5a;"></div>
<svg class="a" style="left:1709px;top:104px;" width="42" height="40" viewBox="0 0 42 40" fill="none"><rect x="3.200" y="9.300" width="33.500" height="25.400" stroke="#c4c4c4" stroke-width="1.900"/><path d="M5.900 12v20.100h28.400V12z" stroke="#8e8e8e" stroke-width="1.200"/><path d="M5.900 18h28.400M19.600 18v14" stroke="#b8b8b8" stroke-width="1.400"/><path d="M22.500 2h19.500v20.700H30v-8h-7.500z" fill="#282828"/><path d="M29.300 2.300l2 5 5 2-5 2-2 5-2-5-5-2 5-2z" fill="#e8501f"/><path d="M36.100 14.400l1.200 2.900 2.900 1.200-2.900 1.200-1.200 2.900-1.200-2.900-2.900-1.200 2.900-1.200z" fill="#e8501f"/></svg>
<span class="t" style="left:1655.80px;top:151.00px;font-size:15.2px;color:#fff;letter-spacing:-0.204px;">Suunnitteluehdotukset</span>
<svg class="a" style="left:1816.5px;top:108.3px;" width="38" height="36" viewBox="0 0 38 36" fill="none"><defs><linearGradient id="c1" x1="0" y1="0" x2="0" y2="1"><stop offset="0" stop-color="#1fa4ec"/><stop offset=".3" stop-color="#1f96d8"/><stop offset=".5" stop-color="#3aa896"/><stop offset=".62" stop-color="#5fb85a"/><stop offset=".78" stop-color="#90d048"/><stop offset=".9" stop-color="#f0a238"/><stop offset="1" stop-color="#f09a38"/></linearGradient>
<linearGradient id="c2" x1="0" y1="0" x2="0" y2="1"><stop offset="0" stop-color="#d65ad6"/><stop offset=".3" stop-color="#d848c8"/><stop offset=".5" stop-color="#ee6a8a"/><stop offset=".8" stop-color="#f07878"/><stop offset="1" stop-color="#f6a030"/></linearGradient></defs>
<path d="M9 25L10.200 30.500C10.800 33 12.500 34.500 15 34.500H22L18 24Z" fill="#e27a3c"/>
<path d="M7.500 .5H22.500C25.500 .5 27 2 27.600 4.500L29 9.800H21.500C19 9.800 17.800 11 17.200 13L13.800 24.200H5C1.500 24.200 -.2 21.600 .8 18L4.300 4.500C5 2 5.800 .5 7.500 .5Z" fill="url(#c1)"/>
<path d="M21 .5H22.500C25.500 .5 27 2 27.600 4.500L29 9.800H21.500C19.300 9.800 18.200 10.600 17.500 12.200Z" fill="#0f6cbd"/>
<path d="M23 10.400H32C35.500 10.400 37.200 13 36.200 16.500L33 30C32.300 32.600 30.500 34.500 27.500 34.500H15C17.500 34 18.500 32 19.200 30L23 17.500Z" fill="url(#c2)"/>
<path d="M19 10.400H23L19.500 22.500C19 24 18.200 24.300 17.500 24.300H13.800L17.200 13C17.500 11.800 18 10.800 19 10.400Z" fill="#282828"/></svg>
<span class="t" style="left:1811.00px;top:151.00px;font-size:15.2px;color:#fff;letter-spacing:0.157px;">Copilot</span>
<span class="t" style="left:1736.30px;top:205.00px;font-size:12.5px;color:#fff;letter-spacing:0.427px;">Copilot</span>
<div class="a" style="left:1872px;top:104px;width:1px;height:111px;background:#5a5a5a;"></div>
<svg class="a" style="left:1884px;top:199px;" width="16" height="12" viewBox="0 0 16 12" fill="none"><path d="M2 2.800l6 6 6-6" stroke="#fff" stroke-width="1.500" stroke-linecap="round" stroke-linejoin="round"/></svg>
<div class="a" style="left:68px;top:287px;width:1341.5px;height:758px;background:#ededed;"></div>
<div class="a" style="left:68px;top:988px;width:1341.5px;height:38px;background:linear-gradient(180deg,#ededed 0%,#e9e9e9 40%,#dfdfdf 100%);"></div>
<div class="a" style="left:68px;top:1026px;width:1341.5px;height:19px;background:#ffffff;"></div>
<svg class="a" style="left:1110px;top:985px;overflow:hidden;" width="290" height="41" viewBox="0 0 290 41" fill="none"><defs><filter id="ts" x="-10%" y="-40%" width="120%" height="180%"><feGaussianBlur stdDeviation="3.500"/></filter></defs>
<path d="M22 43C30 41 30.500 38 31.500 33L34 21C34.800 17.500 36.500 16 40 16L236 11.800C240 11.700 241.800 13 242.500 16.500L246 33C247 38 250 41 259 43Z" fill="#000" opacity=".2" filter="url(#ts)"/>
<path d="M18 41.500C28 41 30.500 38 31.500 33L34 21C34.800 17.500 36.500 16 40 16L236 11.800C240 11.700 241.800 13 242.500 16.500L246 33C247 38 250 41 263 41.500Z" fill="#fff"/></svg>
<span class="t" style="left:1159.00px;top:1008.00px;font-size:19.5px;color:#3f3f3f;font-weight:700;transform:scaleX(1.0333);-webkit-text-stroke:.7px #3f3f3f;">©</span>
<span class="t" style="left:1182.00px;top:1008.00px;font-size:19.8px;color:#3f3f3f;font-weight:700;">2020</span>
<span class="t" style="left:1233.00px;top:1008.00px;font-size:19.8px;color:#3f3f3f;transform:scaleX(1.0054);">Solu Digital</span>
<span class="t" style="left:220.05px;top:338.00px;font-size:73.5px;color:#77c043;transform:scaleX(1.0498);-webkit-text-stroke:.8px #77c043;">Ymmärryksen ja luottamuksen</span>
<span class="t" style="left:354.84px;top:429.00px;font-size:73.5px;color:#77c043;transform:scaleX(1.0410);-webkit-text-stroke:.8px #77c043;">lisääminen viestinnällä</span>
<div class="a" style="left:136px;top:517px;width:1206px;height:475px;background:#239fc5;"></div>
<div class="a" style="left:136px;top:659px;width:1206px;height:300px;background:#ffffff;"></div>
<div class="a" style="left:138px;top:660.5px;width:399px;height:297.5px;background:#27b1dd;"></div>
<div class="a" style="left:539px;top:660.5px;width:400px;height:297.5px;background:#27b1dd;"></div>
<div class="a" style="left:941px;top:660.5px;width:399px;height:297.5px;background:#27b1dd;"></div>
<span class="t" style="left:292.80px;top:549.00px;font-size:35.5px;color:#fff;transform:scaleX(1.1243);-webkit-text-stroke:.3px #fff;">Viestitään miksi muutos on tarpeen huomioiden eri</span>
<span class="t" style="left:152.43px;top:595.00px;font-size:35.5px;color:#fff;transform:scaleX(1.1338);-webkit-text-stroke:.3px #fff;">käyttäjäryhmien erilaiset tavoitteet, tarpeet ja kipupisteet työssään</span>
<span class="t" style="left:206.50px;top:751.00px;font-size:19.2px;color:#fff;transform:scaleX(1.1014);-webkit-text-stroke:.25px #fff;">Mitä hyötyä tästä on minulle</span>
<span class="t" style="left:193.20px;top:775.00px;font-size:19.2px;color:#fff;transform:scaleX(1.1206);-webkit-text-stroke:.25px #fff;">tietotyöläisenä/toimihenkilönä/</span>
<span class="t" style="left:180.00px;top:799.00px;font-size:19.2px;color:#fff;transform:scaleX(1.1162);-webkit-text-stroke:.25px #fff;">tuotantotyöntekijänä/esimiehenä/</span>
<span class="t" style="left:162.81px;top:824.00px;font-size:19.2px;color:#fff;transform:scaleX(1.0880);-webkit-text-stroke:.25px #fff;">projektipäällikkönä tai –ryhmäläisenä/</span>
<span class="t" style="left:258.06px;top:848.00px;font-size:19.2px;color:#fff;transform:scaleX(1.0564);-webkit-text-stroke:.25px #fff;">johdon jäsenenä?</span>
<span class="t" style="left:545.22px;top:757.00px;font-size:19.2px;color:#fff;transform:scaleX(1.0800);-webkit-text-stroke:.25px #fff;">Mitä tämä muutos tarkoittaa päivittäisessä</span>
<span class="t" style="left:585.70px;top:781.00px;font-size:19.2px;color:#fff;transform:scaleX(1.0772);-webkit-text-stroke:.25px #fff;">työssäni osastollani/projektissani/</span>
<span class="t" style="left:619.80px;top:806.00px;font-size:19.2px;color:#fff;transform:scaleX(1.0362);-webkit-text-stroke:.25px #fff;">asiakohtaisessa tiimissäni?</span>
<span class="t" style="left:610.80px;top:840.00px;font-size:19.2px;color:#fff;transform:scaleX(1.0988);-webkit-text-stroke:.25px #fff;">Miksi minun pitää muuttua?</span>
<span class="t" style="left:1050.12px;top:711.00px;font-size:19.2px;color:#fff;transform:scaleX(1.0824);-webkit-text-stroke:.25px #fff;">Miksi tätä tehdään?</span>
<span class="t" style="left:982.33px;top:746.00px;font-size:19.2px;color:#fff;transform:scaleX(1.0715);-webkit-text-stroke:.25px #fff;">Miten näitä sovelluksia ja palveluja</span>
<span class="t" style="left:1002.95px;top:770.00px;font-size:19.2px;color:#fff;transform:scaleX(1.0504);-webkit-text-stroke:.25px #fff;">hyödynnetään organisaatiossa</span>
<span class="t" style="left:1083.50px;top:794.00px;font-size:19.2px;color:#fff;transform:scaleX(1.0620);-webkit-text-stroke:.25px #fff;">tehokkaasti?</span>
<span class="t" style="left:953.53px;top:828.00px;font-size:19.2px;color:#fff;transform:scaleX(1.0714);-webkit-text-stroke:.25px #fff;">Miksi organisaatio haluaa tätä muutosta?</span>
<span class="t" style="left:964.90px;top:862.00px;font-size:19.2px;color:#fff;transform:scaleX(1.0955);-webkit-text-stroke:.25px #fff;">Mihin epäkohtiin muutoksella pyritään</span>
<span class="t" style="left:1074.40px;top:886.00px;font-size:19.2px;color:#fff;transform:scaleX(1.0667);-webkit-text-stroke:.25px #fff;">vaikuttamaan?</span>
<svg class="a" style="left:17px;top:244px;" width="13" height="15" viewBox="0 0 13 15" fill="none"><path d="M3 2.500l5.200 5-5.200 5" stroke="#dedede" stroke-width="2.300"/></svg>
<span class="t" style="left:16.6px;top:344px;font-size:14px;color:#fff;transform:rotate(-90deg);transform-origin:0 0;letter-spacing:.2px">Pikkukuvat</span>
<div class="a" style="left:69px;top:238px;width:40px;height:40px;background:#292929;border:1px solid #5e5e5e;box-sizing:border-box;border-radius:8px;"></div>
<svg class="a" style="left:77px;top:246px;" width="24" height="24" viewBox="0 0 24 24" fill="none"><path d="M12.500 1.900l1.700 4.100 4.100 1.700-4.100 1.700-1.700 4.100-1.700-4.100-4.100-1.700 4.100-1.700z" fill="#fff"/><path d="M18 10.900l1.100 2.600 2.600 1.100-2.600 1.100-1.100 2.600-1.100-2.600-2.600-1.100 2.600-1.100z" fill="#fff"/>
<path d="M6.600 11.400L2.800 16M9.600 13.200L7 16.100M5.300 18L2.800 20.800M11.800 17.400L8 21.300" stroke="#fff" stroke-width="1.800" stroke-linecap="round"/></svg>
<svg class="a" style="left:1428px;top:227px;" width="14" height="11" viewBox="0 0 14 11" fill="none"><path d="M7 2l4.800 7h-9.600z" fill="#9a9a9a" stroke="#9a9a9a" stroke-width="1.200" stroke-linejoin="round"/></svg>
<div class="a" style="left:1429px;top:885.5px;width:11px;height:45.5px;background:#9c9c9c;border-radius:5.5px;"></div>
<svg class="a" style="left:1428px;top:1028px;" width="14" height="11" viewBox="0 0 14 11" fill="none"><path d="M7 9.500l5.500-7.500h-11z" fill="#8a8a8a" stroke="#8a8a8a" stroke-width="1" stroke-linejoin="round"/></svg>
<svg class="a" style="left:1427px;top:1045px;" width="16" height="18" viewBox="0 0 16 18" fill="none"><path d="M8 1l6 7.500H2zM8 8l6 7.500H2z" fill="#8a8a8a"/></svg>
<svg class="a" style="left:1427px;top:1066px;" width="16" height="18" viewBox="0 0 16 18" fill="none"><path d="M8 17l6-7.500H2zM8 10l6-7.500H2z" fill="#8a8a8a"/></svg>
<div class="a" style="left:1461px;top:239px;width:443px;height:857px;background:#fafafa;"></div>
<svg class="a" style="left:1510px;top:261px;" width="24" height="20" viewBox="0 0 24 20" fill="none"><path d="M2 3.500h14M2 10h19.500M2 16.500h13" stroke="#424242" stroke-width="1.400" stroke-linecap="round"/></svg>
<svg class="a" style="left:1551px;top:261px;" width="22" height="21.1" viewBox="0 0 24 23" fill="none"><path d="M11.500 2c2.800 2 5.500 2.800 8.500 2.800v6c0 5-3.500 8.500-8.500 10.200C6.500 19.300 3 15.800 3 10.800v-6c3 0 5.700-.8 8.500-2.800z" stroke="#107c10" stroke-width="1.500" stroke-linejoin="round"/><path d="M7.500 11.200l3 3 5.200-5.500" stroke="#107c10" stroke-width="1.500" stroke-linecap="round" stroke-linejoin="round"/></svg>
<div class="a" style="left:1618px;top:252px;width:80px;height:38.5px;background:#f4f4f4;border:1px solid #d1d1d1;box-sizing:border-box;border-radius:8px;"></div>
<div class="a" style="left:1619px;top:253px;width:39px;height:36.5px;background:#ffffff;border-radius:7px 0 0 7px;"></div>
<div class="a" style="left:1658px;top:253px;width:1px;height:36.5px;background:#d1d1d1;"></div>
<svg class="a" style="left:1626px;top:260px;" width="24" height="22" viewBox="0 0 24 22" fill="none"><path d="M8.500 5V3.800C8.500 2.800 9.300 2 10.300 2h3.400c1 0 1.800.8 1.800 1.800V5" stroke="#c43e1c" stroke-width="1.600"/><rect x="1.500" y="5" width="21" height="15.500" rx="3" fill="#c43e1c"/><path d="M1.500 11.500h21" stroke="#fafafa" stroke-width="1.300"/><rect x="10.300" y="10" width="3.400" height="3.600" rx=".8" fill="#fafafa"/></svg>
<svg class="a" style="left:1667px;top:260px;" width="22" height="22" viewBox="0 0 22 22" fill="none"><circle cx="11" cy="11" r="9.300" stroke="#616161" stroke-width="1.300"/><ellipse cx="11" cy="11" rx="4.300" ry="9.300" stroke="#616161" stroke-width="1.300"/><path d="M2.300 8.200h17.400M2.300 13.800h17.400" stroke="#616161" stroke-width="1.300"/></svg>
<div class="a" style="left:1734px;top:254px;width:36px;height:35px;background:#c43e1c;border-radius:8px;"></div>
<svg class="a" style="left:1742px;top:261px;" width="20" height="20" viewBox="0 0 20 20" fill="none"><path d="M9 3.500H5.500a2.500 2.500 0 0 0-2.500 2.500v8.500A2.500 2.500 0 0 0 5.500 17H14a2.500 2.500 0 0 0 2.500-2.500V11" stroke="#fff" stroke-width="1.400" stroke-linecap="round"/><path d="M8 12l1-3 7.500-7 1.800 1.800-7.300 7.200z" fill="#fff"/></svg>
<div class="a" style="left:1792.9px;top:270.2px;width:2.6px;height:2.6px;background:#424242;border-radius:1.3px;"></div>
<div class="a" style="left:1799.3px;top:270.2px;width:2.6px;height:2.6px;background:#424242;border-radius:1.3px;"></div>
<div class="a" style="left:1805.7px;top:270.2px;width:2.6px;height:2.6px;background:#424242;border-radius:1.3px;"></div>
<svg class="a" style="left:1841px;top:262px;" width="19" height="19" viewBox="0 0 19 19" fill="none"><path d="M2.500 2.500l14 14M16.500 2.500l-14 14" stroke="#424242" stroke-width="1.300" stroke-linecap="round"/></svg>
<span class="t" style="left:1496.50px;top:321.00px;font-size:24.3px;color:#1f1f1f;font-weight:700;letter-spacing:0.132px;">Tarvitsetko luovaa inspiraatiota?</span>
<div class="a" style="left:1480.5px;top:468px;width:386.5px;height:104px;background:#ffffff;border:1px solid #e3e3e3;box-sizing:border-box;border-radius:20px;border-bottom:1.5px solid #7a7a7a;box-shadow:0 1px 3px rgba(0,0,0,.08);"></div>
<span class="t" style="left:1500.50px;top:488.00px;font-size:16.3px;color:#6e6e6e;letter-spacing:0.501px;">Lähetä viesti Copilotille</span>
<svg class="a" style="left:1502px;top:530px;" width="22" height="22" viewBox="0 0 22 22" fill="none"><path d="M11 2v18.500M1.800 11.200h18.400" stroke="#424242" stroke-width="1.300" stroke-linecap="round"/></svg>
<svg class="a" style="left:1768px;top:530px;" width="22" height="24" viewBox="0 0 22 24" fill="none"><rect x="7.300" y="2" width="7" height="12" rx="3.500" stroke="#424242" stroke-width="1.300"/><path d="M4 10.500c0 4 3 6.500 6.800 6.500s6.800-2.500 6.800-6.500M10.800 17v4" stroke="#424242" stroke-width="1.300" stroke-linecap="round"/></svg>
<svg class="a" style="left:1815px;top:530px;" width="24" height="24" viewBox="0 0 24 24" fill="none"><path d="M3 9.500v4M7.200 6v11M11.400 1.500v20M15.600 6v11M19.800 9.500v4" stroke="#424242" stroke-width="1.400" stroke-linecap="round"/></svg>
<div class="a" style="left:1481px;top:601px;width:385px;height:52px;background:#ffffff;border:1px solid #e0e0e0;box-sizing:border-box;border-radius:13px;"></div>
<span class="t" style="left:1496.40px;top:620.00px;font-size:14.3px;color:#424242;letter-spacing:0.484px;-webkit-text-stroke:.45px #424242;">Luo kuva tälle dialle</span>
<div class="a" style="left:1481px;top:671px;width:385px;height:52px;background:#ffffff;border:1px solid #e0e0e0;box-sizing:border-box;border-radius:13px;"></div>
<span class="t" style="left:1496.40px;top:690.00px;font-size:14.3px;color:#424242;letter-spacing:0.472px;-webkit-text-stroke:.45px #424242;">Mikä on tämän dian tärkein asia?</span>
<div class="a" style="left:1481px;top:740px;width:385px;height:52px;background:#ffffff;border:1px solid #e0e0e0;box-sizing:border-box;border-radius:13px;"></div>
<span class="t" style="left:1497.40px;top:760.00px;font-size:14.3px;color:#424242;letter-spacing:0.336px;-webkit-text-stroke:.45px #424242;">Tee yhteenveto tästä esityksestä</span>
<span class="t" style="left:1491.00px;top:816.00px;font-size:14.3px;color:#424242;letter-spacing:0.223px;">Näytä lisää</span>
<svg class="a" style="left:1570px;top:819px;" width="14" height="10" viewBox="0 0 14 10" fill="none"><path d="M2.500 2.500l4.500 4.500 4.500-4.500" stroke="#424242" stroke-width="1.300" stroke-linecap="round" stroke-linejoin="round"/></svg>
<span class="t" style="left:1478.00px;top:1063.00px;font-size:15px;color:#616161;letter-spacing:0.021px;">M365 Copilot (Premium)</span>
<svg class="a" style="left:1653px;top:1062px;" width="15" height="15" viewBox="0 0 15 15" fill="none"><circle cx="7.500" cy="7.500" r="5.800" stroke="#424242" stroke-width="1.200"/><path d="M7.500 6.800v3.700" stroke="#424242" stroke-width="1.300" stroke-linecap="round"/><circle cx="7.500" cy="4.600" r=".8" fill="#424242"/></svg>
<div class="a" style="left:0px;top:1113px;width:1912px;height:1px;background:#2c2c2c;"></div>
<div class="a" style="left:0px;top:1114px;width:1912px;height:23px;background:#141414;"></div>
<div class="a" style="left:1463px;top:1114px;width:50px;height:23px;background:#282828;"></div>
<span class="t" style="left:14.00px;top:1122.00px;font-size:12.8px;color:#fff;letter-spacing:0.355px;">Dia 15/17</span>
<svg class="a" style="left:95px;top:1119px;" width="20" height="16" viewBox="0 0 20 16" fill="none"><path d="M9 2C7 1 4.500 1 2 2v11c2.500-1 5-1 7 0zM9 2c2-1 4.500-1 6.500 0v6" stroke="#fff" stroke-width="1.300" stroke-linejoin="round"/><path d="M11.500 9.500l6 6M17.500 9.500l-6 6" stroke="#fff" stroke-width="1.300"/></svg>
<span class="t" style="left:136.50px;top:1122.00px;font-size:12.8px;color:#fff;letter-spacing:-0.028px;">englanti (Yhdysvallat)</span>
<svg class="a" style="left:278px;top:1118px;" width="20" height="18" viewBox="0 0 20 18" fill="none"><circle cx="8.500" cy="2.800" r="1.800" stroke="#fff" stroke-width="1.200"/><path d="M2 6.500l4.500 1.200h4L15 6.500M6.500 7.700v4L4 17M10.500 7.700v3" stroke="#fff" stroke-width="1.300" stroke-linecap="round" stroke-linejoin="round"/><path d="M11 11.500l6 6M17 11.500l-6 6" stroke="#fff" stroke-width="1.300"/></svg>
<span class="t" style="left:301.00px;top:1122.00px;font-size:12.8px;color:#fff;font-weight:700;letter-spacing:0.062px;">Helppokäyttöisyys: tutustu suosituksiin</span>
<svg class="a" style="left:1200px;top:1117px;" width="21" height="20" viewBox="0 0 21 20" fill="none"><path d="M7 5l4-3.500 4 3.500" stroke="#fff" stroke-width="1.400"/><path d="M1 9.500h20M1 14h20M1 19h20" stroke="#fff" stroke-width="1.800"/></svg>
<span class="t" style="left:1222.00px;top:1122.00px;font-size:12.8px;color:#fff;letter-spacing:0.346px;">Muistiinpanot</span>
<svg class="a" style="left:1323px;top:1118px;" width="22" height="18" viewBox="0 0 22 18" fill="none"><path d="M8 12.500H1.500v-10.500h15.500V7" stroke="#fff" stroke-width="1.300"/><circle cx="14" cy="12.500" r="2.600" stroke="#fff" stroke-width="1.300"/><path d="M14 8v1.500M14 15.500V17M9.500 12.500H11M17 12.500h1.500M10.800 9.300l1.100 1.100M16.100 14.600l1.100 1.100M17.200 9.300l-1.100 1.100M11.900 14.600l-1.100 1.100" stroke="#fff" stroke-width="1.200"/></svg>
<span class="t" style="left:1344.00px;top:1122.00px;font-size:12.8px;color:#fff;letter-spacing:0.164px;">Näyttöasetukset</span>
<svg class="a" style="left:1479px;top:1118px;" width="19" height="17" viewBox="0 0 19 17" fill="none"><rect x="1" y="1.700" width="17" height="14" stroke="#fff" stroke-width="1.500"/><path d="M5.200 1.700v14M5.200 12.300H18" stroke="#fff" stroke-width="1.400"/><rect x="8.200" y="4.800" width="6.500" height="4.200" stroke="#fff" stroke-width="1.300"/></svg>
<svg class="a" style="left:1528px;top:1118px;" width="20" height="17" viewBox="0 0 20 17" fill="none"><rect x="1" y="1" width="7" height="6" stroke="#fff" stroke-width="1.400"/><rect x="11.500" y="1" width="7" height="6" stroke="#fff" stroke-width="1.400"/><rect x="1" y="10" width="7" height="6" stroke="#fff" stroke-width="1.400"/><rect x="11.500" y="10" width="7" height="6" stroke="#fff" stroke-width="1.400"/></svg>
<svg class="a" style="left:1578px;top:1117px;" width="19" height="18" viewBox="0 0 19 18" fill="none"><path d="M9.500 3C7.500 1.500 4.500 1.500 1.500 2.500v13c3-1 6-1 8 .5 2-1.500 5-1.500 8-.5v-13c-3-1-6-1-8 .5zM9.500 3v13" stroke="#fff" stroke-width="1.300" stroke-linejoin="round"/><path d="M3.500 5.500h4M3.500 8.500h4M3.500 11.500h4M11.500 5.500h4M11.500 8.500h4M11.500 11.500h4" stroke="#fff" stroke-width="1"/></svg>
<svg class="a" style="left:1628px;top:1117px;" width="19" height="19" viewBox="0 0 19 19" fill="none"><path d="M1 1.500h17" stroke="#fff" stroke-width="1.500"/><rect x="3" y="1.500" width="13" height="8.500" stroke="#fff" stroke-width="1.400"/><path d="M9.500 10v6M5.500 16.500h8" stroke="#fff" stroke-width="1.400"/></svg>
<div class="a" style="left:1671px;top:1126.5px;width:9px;height:1px;background:#fff;"></div>
<div class="a" style="left:1686px;top:1126.5px;width:124px;height:1px;background:#8a8a8a;"></div>
<div class="a" style="left:1748px;top:1120.5px;width:6.5px;height:13.5px;background:#9a9a9a;"></div>
<div class="a" style="left:1817px;top:1126.5px;width:10px;height:1px;background:#fff;"></div>
<div class="a" style="left:1821.5px;top:1122px;width:1px;height:10px;background:#fff;"></div>
<span class="t" style="left:1844.00px;top:1122.00px;font-size:12.8px;color:#fff;letter-spacing:-0.239px;">112 %</span>
<svg class="a" style="left:1894px;top:1117px;" width="18" height="19" viewBox="0 0 18 19" fill="none"><path d="M9 1l3.500 3.500h-7zM9 18l3.500-3.500h-7zM1 9.500l3-3v6z" fill="#fff"/><rect x="5.500" y="6" width="7" height="7" stroke="#fff" stroke-width="1.400"/></svg>
</body></html>
